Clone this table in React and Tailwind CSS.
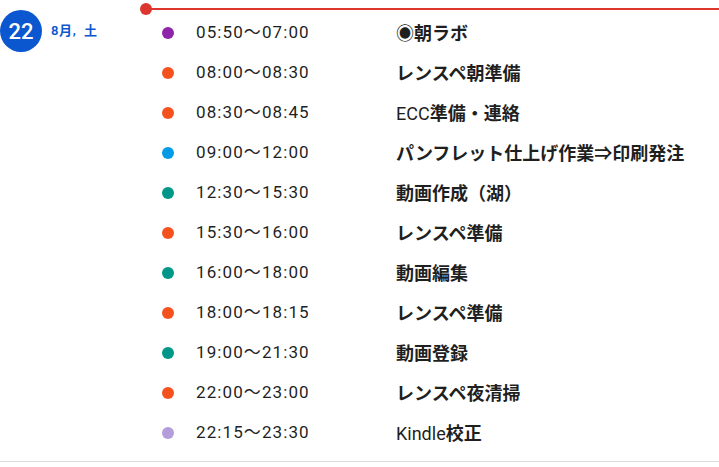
import React from "react";

const events = [
  { c: "#8e24aa", t: "05:50〜07:00", title: [["◉", 0], ["朝ラボ", 1]] },
  { c: "#f4511e", t: "08:00〜08:30", title: [["レンスペ朝準備", 1]] },
  { c: "#f4511e", t: "08:30〜08:45", title: [["ECC", 0], ["準備・連絡", 1]] },
  { c: "#039be5", t: "09:00〜12:00", title: [["パンフレット仕上げ作業⇒印刷発注", 1]] },
  { c: "#009688", t: "12:30〜15:30", title: [["動画作成（湖）", 1]] },
  { c: "#f4511e", t: "15:30〜16:00", title: [["レンスペ準備", 1]] },
  { c: "#009688", t: "16:00〜18:00", title: [["動画編集", 1]] },
  { c: "#f4511e", t: "18:00〜18:15", title: [["レンスペ準備", 1]] },
  { c: "#009688", t: "19:00〜21:30", title: [["動画登録", 1]] },
  { c: "#f4511e", t: "22:00〜23:00", title: [["レンスペ夜清掃", 1]] },
  { c: "#b39ddb", t: "22:15〜23:30", title: [["Kindle", 0], ["校正", 1]] },
];

export default function App() {
  return (
    <div
      className="w-[719px] h-[467px] bg-white overflow-hidden"
      style={{ fontFamily: '"Roboto", "Noto Sans CJK JP", sans-serif' }}
    >
      <div className="flex h-[462px] border-b border-[#dadce0]">
        <div className="w-[140px] shrink-0 flex items-start pt-[10px]">
          <div className="w-[42px] h-[42px] rounded-full bg-[#0b57d0] text-white flex items-center justify-center text-[22px] font-medium">
            22
          </div>
          <div className="ml-[9px] mt-[13px] text-[13px] font-semibold tracking-[0.6px] text-[#0b57d0] leading-4 whitespace-nowrap">
            8月,&nbsp;&nbsp;土
          </div>
        </div>
        <div className="relative flex-1 pt-[13px]">
          <div className="absolute left-0 right-0 top-[3px] h-3">
            <div className="absolute left-0 top-0 w-3 h-3 rounded-full bg-[#dc362e]" />
            <div className="absolute left-[6px] right-0 top-[5px] h-[2px] bg-[#dc362e]" />
          </div>
          {events.map((e, i) => (
            <div key={i} className="flex items-center h-10 text-[#1f1f1f]">
              <div className="ml-[22px] w-3 h-3 rounded-full shrink-0" style={{ backgroundColor: e.c }} />
              <div className="ml-[22px] w-[200px] shrink-0 text-[17px] tracking-[1.1px]">{e.t}</div>
              <div className="text-[18px] whitespace-nowrap">
                {e.title.map(([s, b], j) => (
                  <span key={j} className={b ? "font-bold" : "font-normal"}>{s}</span>
                ))}
              </div>
            </div>
          ))}
        </div>
      </div>
    </div>
  );
}
